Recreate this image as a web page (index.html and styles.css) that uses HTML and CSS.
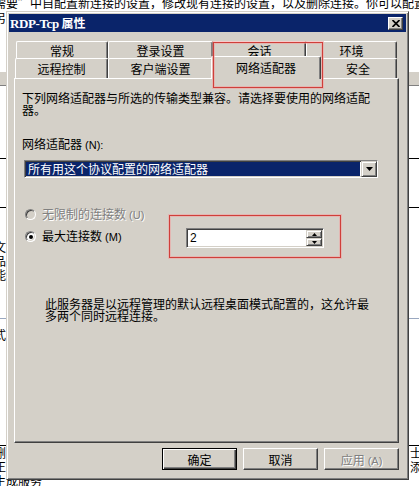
FILE: index.html
```html
<!DOCTYPE html>
<html lang="zh-CN">
<head>
    <meta charset="UTF-8">
    <title>RDP-Tcp 属性</title>
    <link rel="stylesheet" href="styles.css">
</head>
<body>
    <!-- page behind the dialog -->
    <div class="page">
        <div class="page-top">需要”中自配置新连接的设置，修改现有连接的设置，以及删除连接。你可以配置</div>
        <div class="page-row row-intro"><span class="cut">另</span></div>
        <div class="page-row row-head"></div>
        <div class="page-row row-a"></div>
        <div class="page-row row-b"></div>
        <div class="page-row row-c"><span class="cut">文<br>品<br>能</span></div>
        <div class="page-row row-d"><span class="cut">式</span></div>
        <div class="page-row row-e">
            <span class="cut">删<br>正<br>生成服务</span>
            <span class="cut-right">士<br>添</span>
        </div>
    </div>

    <div class="dialog">
        <div class="titlebar">
            <span class="title"><span class="latin">RDP-Tcp</span> 属性</span>
            <button class="close" type="button">
                <svg width="8" height="7" viewBox="0 0 8 7"><path d="M0.5 0 L7.5 7 M7.5 0 L0.5 7" stroke="#000" stroke-width="1.7" fill="none"/></svg>
            </button>
        </div>

        <div class="dialog-body">
            <div class="tabs">
                <div class="tab-row tab-row-back">
                    <div class="tab">常规</div>
                    <div class="tab">登录设置</div>
                    <div class="tab">会话</div>
                    <div class="tab">环境</div>
                </div>
                <div class="tab-row tab-row-front">
                    <div class="tab">远程控制</div>
                    <div class="tab">客户端设置</div>
                    <div class="tab active">网络适配器</div>
                    <div class="tab">安全</div>
                </div>
            </div>

            <div class="panel">
                <p class="intro">下列网络适配器与所选的传输类型兼容。请选择要使用的网络适配器。</p>

                <div class="field-label">网络适配器<span class="key"> (N):</span></div>
                <div class="select">
                    <div class="select-value">所有用这个协议配置的网络适配器</div>
                    <div class="select-btn">
                        <svg width="7" height="4" viewBox="0 0 7 4"><polygon points="0,0 7,0 3.5,4" fill="#000"/></svg>
                    </div>
                </div>

                <div class="radio-row">
                    <div class="radio-group disabled">
                        <span class="radio"></span>
                        <span>无限制的连接数<span class="key"> (U)</span></span>
                    </div>
                </div>
                <div class="radio-row radio-row-spin">
                    <div class="radio-group">
                        <span class="radio checked"></span>
                        <span>最大连接数<span class="key"> (M)</span></span>
                    </div>
                    <div class="spin">
                        <div class="spin-value">2</div>
                        <div class="spin-btns">
                            <div class="spin-btn">
                                <svg width="5" height="3" viewBox="0 0 5 3"><polygon points="0,3 5,3 2.5,0" fill="#000"/></svg>
                            </div>
                            <div class="spin-btn">
                                <svg width="5" height="3" viewBox="0 0 5 3"><polygon points="0,0 5,0 2.5,3" fill="#000"/></svg>
                            </div>
                        </div>
                    </div>
                </div>

                <p class="note">此服务器是以远程管理的默认远程桌面模式配置的，这允许最多两个同时远程连接。</p>

                <div class="mark mark-spin"></div>
            </div>

            <div class="buttons">
                <button class="btn btn-default" type="button">确定</button>
                <button class="btn" type="button">取消</button>
                <button class="btn" type="button" disabled>应用<span class="key"> (A)</span></button>
            </div>
        </div>

        <div class="mark mark-tab"></div>
    </div>
</body>
</html>
```

FILE: styles.css
```css
* {
    box-sizing: border-box;
}

html,
body {
    margin: 0;
    padding: 0;
}

body {
    width: 419px;
    height: 486px;
    overflow: hidden;
    position: relative;
    background: #fff;
    font-family: "Noto Sans CJK SC", sans-serif;
    font-size: 12px;
    color: #000;
}

/* page behind */
.page-top {
    margin: -5px 0 0 -6px;
    height: 16px;
    line-height: 16px;
    white-space: nowrap;
}

.page-row {
    display: flex;
    justify-content: space-between;
    line-height: 14px;
}

.cut {
    margin-left: -6px;
}

.cut-right {
    margin-right: -3px;
}

.row-intro {
    height: 60px;
}

.row-head {
    height: 15px;
    background: #d4d0c8;
    border-top: 1px solid #fff;
    border-bottom: 1px solid #808080;
}

.row-a {
    height: 73px;
    border-bottom: 1px solid #000;
}

.row-b {
    height: 49px;
    border-bottom: 1px solid #000;
}

.row-c {
    height: 111px;
    padding-top: 32px;
    border-bottom: 1px solid #9aa8c0;
}

.row-d {
    height: 127px;
    padding-top: 9px;
    border-bottom: 1px solid #000;
}

/* dialog */
.dialog {
    position: absolute;
    left: 6px;
    top: 11px;
    width: 403px;
    height: 469px;
    background: #d4d0c8;
    border: 1px solid;
    border-color: #d4d0c8 #404040 #404040 #d4d0c8;
    box-shadow: inset 1px 1px #fff, inset -1px -1px #808080;
    padding: 2px;
    display: flex;
    flex-direction: column;
}

.titlebar {
    height: 18px;
    background: #0a246a;
    display: flex;
    align-items: center;
    justify-content: space-between;
    padding: 0 3px 0 1px;
}

.title {
    color: #fff;
    font-weight: bold;
    font-size: 12px;
    line-height: 14px;
}

.title .latin {
    font-family: "Liberation Serif", serif;
    font-size: 13px;
    letter-spacing: -0.4px;
}

.close {
    width: 15px;
    height: 13px;
    padding: 0;
    background: #d4d0c8;
    border: 1px solid;
    border-color: #fff #404040 #404040 #fff;
    box-shadow: inset -1px -1px #808080;
    display: flex;
    align-items: center;
    justify-content: center;
}

.dialog-body {
    flex: 1;
    padding: 9px 7px 0 5px;
}

/* tabs */
.tabs {
    height: 37px;
}

.tab-row {
    display: flex;
}

.tab-row-back {
    margin-left: 2px;
}

.tab-row-front {
    margin-left: 1px;
}

.tab {
    background: #d4d0c8;
    border-top: 1px solid #fff;
    border-left: 1px solid #fff;
    border-right: 1px solid #404040;
    box-shadow: inset -1px 0 #808080;
    border-radius: 2px 2px 0 0;
    text-align: center;
    flex: none;
}

.tab-row-back .tab {
    height: 17px;
    padding-top: 1px;
    line-height: 15px;
}

.tab-row-back .tab:nth-child(1) { width: 92px; }
.tab-row-back .tab:nth-child(2) { width: 105px; }
.tab-row-back .tab:nth-child(3) { width: 93px; }
.tab-row-back .tab:nth-child(4) { width: 91px; }

.tab-row-front .tab {
    height: 20px;
    padding-top: 1px;
    line-height: 18px;
}

.tab-row-front .tab:nth-child(1) { width: 93px; }
.tab-row-front .tab:nth-child(2) { width: 105px; }
.tab-row-front .tab:nth-child(4) { width: 78px; }

.tab-row-front .tab.active {
    width: 110px;
    height: 23px;
    margin: -2px -2px -1px;
    padding-top: 2px;
    line-height: 17px;
    position: relative;
    z-index: 2;
}

/* panel */
.panel {
    height: 365px;
    position: relative;
    border: 1px solid;
    border-color: #fff #404040 #404040 #fff;
    box-shadow: inset -1px -1px #808080;
    padding: 13px 0 0 7px;
    line-height: 12px;
}

.intro {
    margin: 0;
    max-width: 356px;
}

.key {
    font-family: "Liberation Sans", sans-serif;
    font-size: 11px;
}

.field-label {
    margin-top: 22px;
}

.select {
    margin: 9px 0 0 2px;
    width: 354px;
    height: 18px;
    display: flex;
    background: #fff;
    border: 1px solid;
    border-color: #808080 #fff #fff #808080;
    box-shadow: inset 1px 1px #404040, inset -1px -1px #d4d0c8;
}

.select-value {
    flex: 1;
    margin: 1px;
    padding-left: 2px;
    background: #0a246a;
    color: #fff;
    line-height: 14px;
}

.select-btn {
    width: 16px;
    background: #d4d0c8;
    border: 1px solid;
    border-color: #d4d0c8 #404040 #404040 #d4d0c8;
    box-shadow: inset 1px 1px #fff, inset -1px -1px #808080;
    display: flex;
    align-items: center;
    justify-content: center;
}

.radio-row {
    display: flex;
    margin-top: 30px;
}

.radio-row-spin {
    margin-top: 7px;
}

.radio-group {
    width: 164px;
    display: flex;
    align-items: center;
    line-height: 12px;
}

.radio-row-spin .radio-group {
    align-self: flex-start;
    margin-top: 2px;
}

.radio {
    width: 11px;
    height: 11px;
    margin: 0 6px 0 3px;
    border-radius: 50%;
    border: 1px solid;
    border-color: #808080 #fff #fff #808080;
    box-shadow: inset 1px 1px #404040, inset -1px -1px #d4d0c8;
    background: #fff;
    display: flex;
    align-items: center;
    justify-content: center;
}

.radio.checked::after {
    content: '';
    width: 4px;
    height: 4px;
    border-radius: 50%;
    background: #000;
}

.disabled {
    color: #808080;
    text-shadow: 1px 1px #fff;
}

.disabled .radio {
    background: #d4d0c8;
}

.spin {
    width: 138px;
    height: 20px;
    display: flex;
    background: #fff;
    border: 1px solid;
    border-color: #808080 #fff #fff #808080;
    box-shadow: inset 1px 1px #404040, inset -1px -1px #d4d0c8;
    padding: 1px;
}

.spin-value {
    flex: 1;
    padding-left: 2px;
    line-height: 16px;
    font-family: "Liberation Sans", sans-serif;
    font-size: 12px;
}

.spin-btns {
    width: 16px;
    display: flex;
    flex-direction: column;
}

.spin-btn {
    flex: 1;
    background: #d4d0c8;
    border: 1px solid;
    border-color: #d4d0c8 #404040 #404040 #d4d0c8;
    box-shadow: inset 1px 1px #fff, inset -1px -1px #808080;
    display: flex;
    align-items: center;
    justify-content: center;
}

.note {
    margin: 50px 0 0 23px;
    max-width: 330px;
}

/* buttons */
.buttons {
    display: flex;
    justify-content: flex-end;
    gap: 6px;
    margin-top: 5px;
}

.btn {
    width: 75px;
    height: 22px;
    padding: 0;
    font-family: "Noto Sans CJK SC", sans-serif;
    font-size: 12px;
    color: #000;
    background: #d4d0c8;
    border: 1px solid;
    border-color: #fff #404040 #404040 #fff;
    box-shadow: inset -1px -1px #808080;
}

.btn-default {
    border-color: #000;
    box-shadow: inset 1px 1px #fff, inset -1px -1px #404040, inset -2px -2px #808080;
}

.btn:disabled {
    color: #808080;
    text-shadow: 1px 1px #fff;
}

/* red annotation boxes */
.mark {
    position: absolute;
    border: 1px solid #cf3f3a;
    box-shadow: 0 0 0 1px rgba(240, 160, 160, 0.55), inset 0 0 0 1px rgba(240, 160, 160, 0.55);
    z-index: 5;
    pointer-events: none;
}

.mark-tab {
    left: 206px;
    top: 30px;
    width: 110px;
    height: 46px;
}

.mark-spin {
    left: 154px;
    top: 136px;
    width: 172px;
    height: 43px;
}
```
